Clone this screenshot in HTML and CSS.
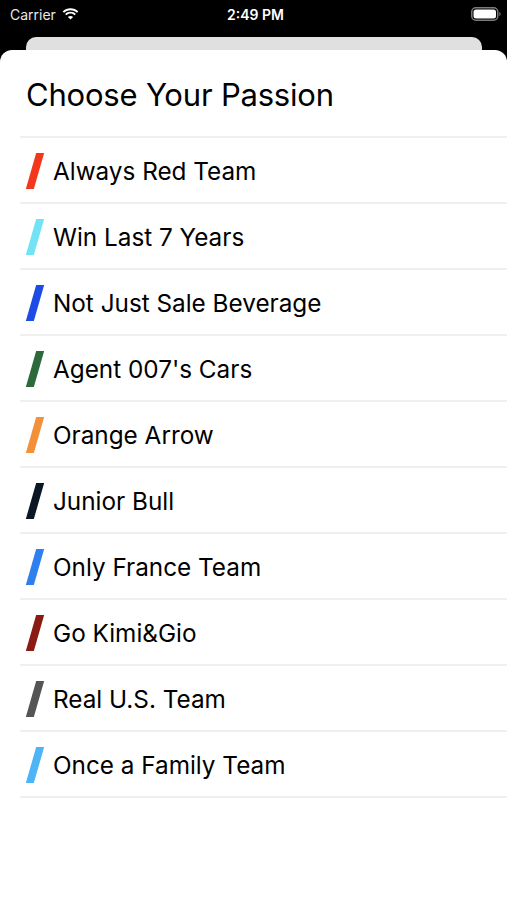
FILE: index.html
```html
<!doctype html>
<html>
<head>
<meta charset="utf-8">
<meta name="viewport" content="width=device-width, initial-scale=1.0">
<link rel="stylesheet" href="styles.css">
<title>Choose Your Passion</title>
</head>
<body>
<div class="status">
    <div class="status-left">
        <span>Carrier</span>
        <svg class="wifi" width="17" height="12" viewBox="0 0 17 12">
            <path d="M8.5 2.2c2.5 0 4.8 1 6.5 2.6l1.3-1.3C14.2 1.4 11.5.3 8.5.3S2.8 1.4.7 3.5L2 4.8c1.7-1.6 4-2.6 6.5-2.6z" fill="#fff"/>
            <path d="M8.5 5.6c1.6 0 3 .6 4.1 1.6l1.3-1.3C12.5 4.6 10.6 3.8 8.5 3.8S4.5 4.6 3.1 5.9l1.3 1.3c1.1-1 2.5-1.6 4.1-1.6z" fill="#fff"/>
            <path d="M8.5 11.6l2.6-2.6c-.7-.7-1.6-1.1-2.6-1.1s-1.9.4-2.6 1.1z" fill="#fff"/>
        </svg>
    </div>
    <div class="status-time">2:49 PM</div>
    <div class="status-right">
        <svg width="30" height="14" viewBox="0 0 30 14">
            <rect x="0.75" y="0.75" width="26" height="12.5" rx="4" fill="none" stroke="#7a7a7a" stroke-width="1.5"/>
            <rect x="2.5" y="2.5" width="22.5" height="9" rx="2.5" fill="#fff"/>
            <path d="M28.3 5v4c.8-.3 1.3-1.1 1.3-2s-.5-1.7-1.3-2z" fill="#7a7a7a"/>
        </svg>
    </div>
</div>

<div class="backcard"></div>

<div class="sheet">
    <h1>Choose Your Passion</h1>
    <ul class="teams">
        <li><span class="stripe" style="background:#f4361d"></span>Always Red Team</li>
        <li><span class="stripe" style="background:#72e3f7"></span>Win Last 7 Years</li>
        <li><span class="stripe" style="background:#1d4be6"></span>Not Just Sale Beverage</li>
        <li><span class="stripe" style="background:#2c6a3c"></span>Agent 007's Cars</li>
        <li><span class="stripe" style="background:#f2913a"></span>Orange Arrow</li>
        <li><span class="stripe" style="background:#0c1726"></span>Junior Bull</li>
        <li><span class="stripe" style="background:#2e80ee"></span>Only France Team</li>
        <li><span class="stripe" style="background:#8a1a12"></span>Go Kimi&amp;Gio</li>
        <li><span class="stripe" style="background:#555555"></span>Real U.S. Team</li>
        <li><span class="stripe" style="background:#4db4f6"></span>Once a Family Team</li>
    </ul>
</div>
</body>
</html>
```
FILE: styles.css
```css
html,
body {
    margin: 0;
    padding: 0;
}
body {
    font-family: Inter, "Noto Sans", sans-serif;
    background-color: black;
    color: black;
    height: 900px;
    overflow: hidden;
}
.status {
    height: 28px;
    display: flex;
    align-items: center;
    justify-content: space-between;
    padding: 0 6px 0 10px;
    color: white;
    font-size: 14px;
}
.status-left {
    flex: 1;
    display: flex;
    align-items: center;
    gap: 6px;
    color: #e8e8e8;
}
.status-time {
    font-weight: 600;
    font-size: 14px;
}
.status-right {
    flex: 1;
    display: flex;
    justify-content: flex-end;
}
.backcard {
    height: 22px;
    margin: 9px 25px 0 26px;
    background-color: #e0e0e0;
    border-radius: 10px 10px 0 0;
}
.sheet {
    margin-top: -9px;
    position: relative;
    background-color: white;
    border-radius: 12px 12px 0 0;
    height: 860px;
}
h1 {
    margin: 0;
    padding: 26px 0 0 26px;
    height: 86px;
    box-sizing: border-box;
    font-size: 31px;
    font-weight: 400;
    line-height: 38px;
    letter-spacing: -0.2px;
}
.teams {
    list-style: none;
    margin: 0 0 0 20px;
    padding: 0;
    border-top: 2px solid #efefef;
}
.teams li {
    height: 66px;
    box-sizing: border-box;
    display: flex;
    align-items: center;
    gap: 14px;
    padding: 1px 0 0 11px;
    font-size: 24.3px;
    border-bottom: 2px solid #efefef;
}
.stripe {
    width: 8px;
    height: 36px;
    transform: skewX(-16deg);
}
```
